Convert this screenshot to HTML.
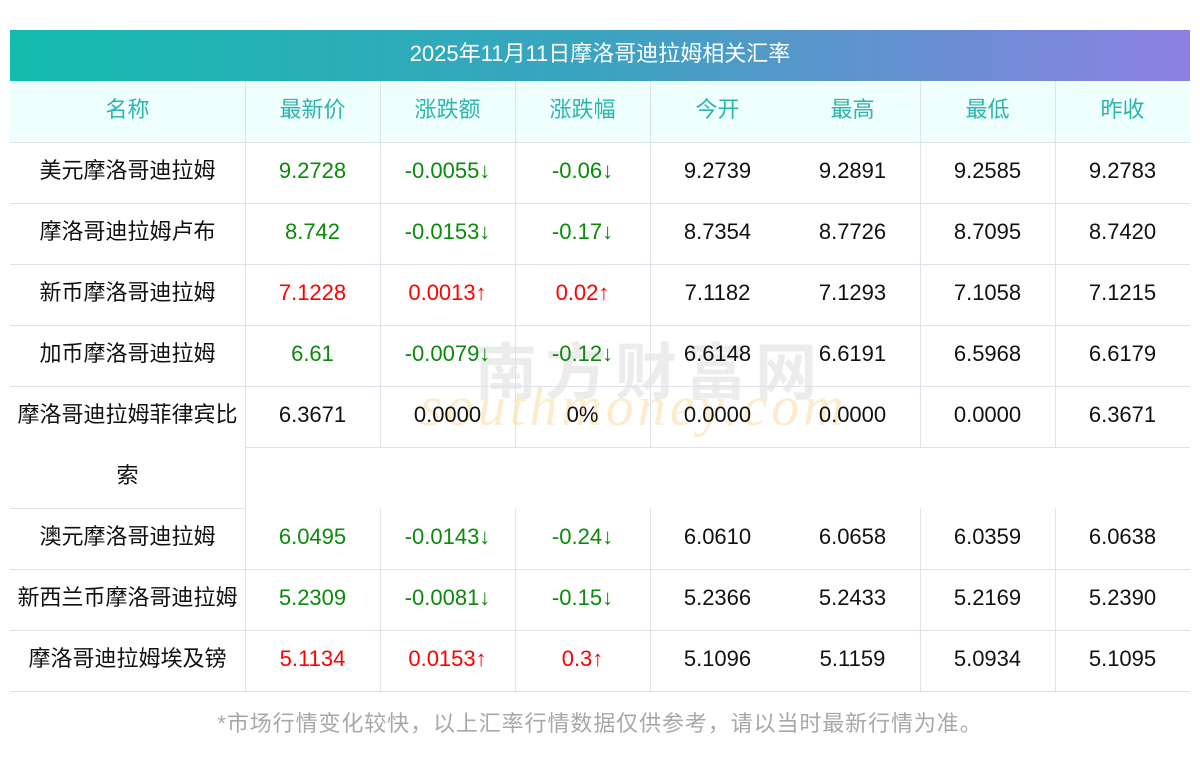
<!DOCTYPE html>
<html><head><meta charset="utf-8"><style>
body{margin:0;width:1200px;height:757px;background:#fff;position:relative;overflow:hidden;font-family:"Liberation Sans","Noto Sans CJK SC",sans-serif}
.a{position:absolute}
.title{left:10px;top:30px;width:1180px;height:51px;background:linear-gradient(90deg,#14bcae,#3ba3c0 50%,#8c80e2);color:#fff;font-size:22px;line-height:48px;text-align:center}
.hd{left:10px;top:81px;width:1180px;height:61px;background:#effffe}
.c{position:absolute;height:61px;line-height:57px;text-align:center;font-size:22px;color:#111;box-sizing:border-box;white-space:nowrap}
.h{color:#2ab5ad}
.g{color:#0a8a0a}.r{color:#f00}
.hl{position:absolute;height:1px;background:#dfe2ec}
.vl{position:absolute;width:1px;background:#dfe2ec}
.foot{left:0;width:1200px;top:706px;text-align:center;font-size:22px;color:#a8a8a8;line-height:36px;letter-spacing:0.9px}
</style></head><body>
<div class="a title">2025年11月11日摩洛哥迪拉姆相关汇率</div>
<div class="a hd"></div>
<div class="a" style="left:475px;top:322px;font-size:62px;color:#ececec;letter-spacing:8px;font-weight:bold">南方财富网</div>
<div class="a" style="left:420px;top:375px;font-size:56px;color:#fdeccc;font-style:italic;font-family:'Liberation Serif',serif;letter-spacing:4px">southmoney.com</div>
<div id="t"></div>
<div class="a foot">*市场行情变化较快，以上汇率行情数据仅供参考，请以当时最新行情为准。</div>
<script>
var xs=[10,245,380,515,650,785,920,1055,1190];
var rows=[
["h","名称","最新价","涨跌额","涨跌幅","今开","最高","最低","昨收"],
["g","美元摩洛哥迪拉姆","9.2728","-0.0055↓","-0.06↓","9.2739","9.2891","9.2585","9.2783"],
["g","摩洛哥迪拉姆卢布","8.742","-0.0153↓","-0.17↓","8.7354","8.7726","8.7095","8.7420"],
["r","新币摩洛哥迪拉姆","7.1228","0.0013↑","0.02↑","7.1182","7.1293","7.1058","7.1215"],
["g","加币摩洛哥迪拉姆","6.61","-0.0079↓","-0.12↓","6.6148","6.6191","6.5968","6.6179"],
["","摩洛哥迪拉姆菲律宾比","6.3671","0.0000","0%","0.0000","0.0000","0.0000","6.3671"],
["g","澳元摩洛哥迪拉姆","6.0495","-0.0143↓","-0.24↓","6.0610","6.0658","6.0359","6.0638"],
["g","新西兰币摩洛哥迪拉姆","5.2309","-0.0081↓","-0.15↓","5.2366","5.2433","5.2169","5.2390"],
["r","摩洛哥迪拉姆埃及镑","5.1134","0.0153↑","0.3↑","5.1096","5.1159","5.0934","5.1095"]];
var ys=[81,142,203,264,325,386,508,569,630];
var h="";
rows.forEach(function(r,i){var y=ys[i];
 for(var j=0;j<8;j++){var cl=(i==0?"h":(j>0&&j<4?r[0]:""));
  h+='<div class="c '+cl+'" style="left:'+xs[j]+'px;top:'+y+'px;width:'+(xs[j+1]-xs[j])+'px">'+r[j+1]+'</div>';
  if(j>0&&j!=5) h+='<div class="vl" style="left:'+xs[j]+'px;top:'+y+'px;height:61px"></div>';}
 if(i!=5) h+='<div class="hl" style="left:10px;top:'+(y+61)+'px;width:1180px"></div>';
});
h+='<div class="c" style="left:10px;top:447px;width:235px">索</div>';
h+='<div class="vl" style="left:245px;top:447px;height:61px"></div>';
h+='<div class="hl" style="left:245px;top:447px;width:945px"></div>';
h+='<div class="hl" style="left:10px;top:508px;width:235px"></div>';
document.getElementById('t').innerHTML=h;
</script>
</body></html>
